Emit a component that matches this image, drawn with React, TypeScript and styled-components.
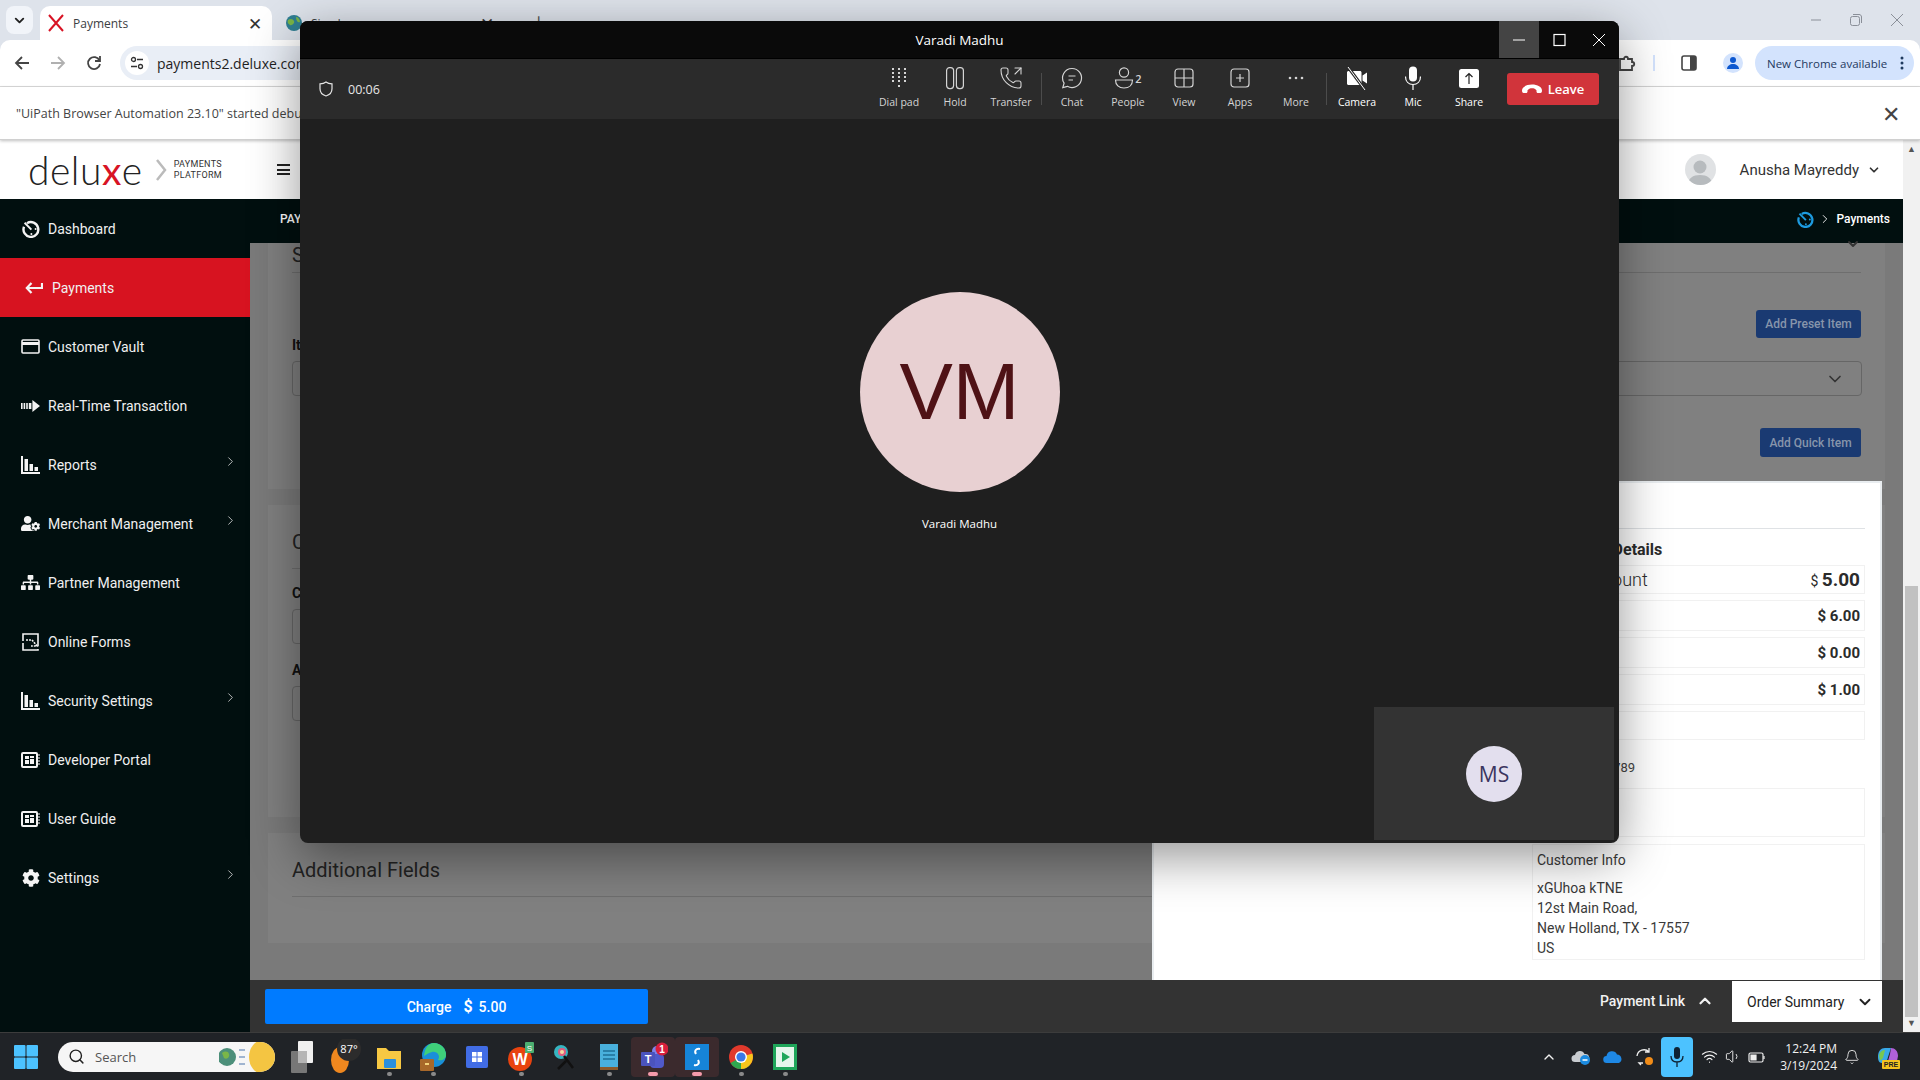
import React from 'react';
import styled, { createGlobalStyle } from 'styled-components';
import { ChevronDown, ChevronRight, ChevronUp, PhoneOutgoing, Search, Bell, Wifi, Volume1 } from 'lucide-react';
import { FaCog, FaSitemap, FaUserCog } from 'react-icons/fa';

const GlobalStyle = createGlobalStyle`
html, body {
    margin: 0;
    padding: 0;
    width: 1920px;
    height: 1080px;
    overflow: hidden;
    background: #dee3eb;
    font-family: Roboto, "Liberation Sans", sans-serif;
}
* { box-sizing: border-box; }
`;

const Desktop = styled.div`
position: relative;
width: 1920px;
height: 1080px;
display: flex;
flex-direction: column;
overflow: hidden;
`;

/* chrome */
const TabStrip = styled.div`
height: 40px;
flex: none;
display: flex;
align-items: flex-end;
padding-left: 6px;
background: #dee3eb;
font-family: "Open Sans", sans-serif;
font-size: 12px;
color: #3c4043;
`;

const TabListButton = styled.div`
width: 27px;
height: 28px;
margin: 0 7px 6px 0;
display: flex;
align-items: center;
justify-content: center;
background: #f1f4f9;
border-radius: 8px;
color: #222;
`;

const Tab = styled.div<{ $active?: boolean }>`
width: 232px;
height: 34px;
display: flex;
align-items: center;
gap: 9px;
padding: 0 10px 0 ${props => props.$active ? "8px" : "14px"};
background: ${props => props.$active ? "#fff" : "transparent"};
border-radius: 10px 10px 0 0;
`;

const TabTitle = styled.span`
flex: 1;
`;

const TabClose = styled.span`
font-size: 17px;
line-height: 1;
color: #333;
`;

const TabPlus = styled.span`
margin: 0 0 9px 29px;
font-size: 20px;
line-height: 1;
color: #555;
`;

const WindowControls = styled.div`
margin-left: auto;
align-self: flex-start;
display: flex;
align-items: center;
gap: 26px;
height: 40px;
padding-right: 15px;
color: #8a8f98;
`;

const ChromeToolbar = styled.div`
height: 47px;
flex: none;
display: flex;
align-items: center;
background: #fff;
border-bottom: 1px solid #dcdcdc;
border-radius: 10px 10px 0 0;
font-family: "Open Sans", sans-serif;
`;

const NavIcon = styled.span`
width: 36px;
display: flex;
justify-content: center;
`;

const Omnibox = styled.div`
width: 700px;
height: 34px;
margin-left: 8px;
display: flex;
align-items: center;
gap: 8px;
padding-left: 5px;
background: #e9eef6;
border-radius: 17px;
font-size: 14px;
color: #1f1f1f;
`;

const TuneBadge = styled.span`
width: 24px;
height: 24px;
display: flex;
align-items: center;
justify-content: center;
background: #fff;
border-radius: 50%;
`;

const ToolbarRight = styled.div`
margin-left: auto;
display: flex;
align-items: center;
padding-right: 6px;
`;

const ToolbarSeparator = styled.span`
width: 2px;
height: 16px;
margin: 0 26px 0 17px;
background: #d3e3fd;
`;

const ProfileBadge = styled.span`
width: 20px;
height: 20px;
margin: 0 12px 0 26px;
display: flex;
align-items: center;
justify-content: center;
background: #d3e3fd;
border-radius: 50%;
`;

const UpdatePill = styled.div`
width: 159px;
height: 34px;
display: flex;
align-items: center;
justify-content: space-between;
padding: 0 10px 0 12px;
background: #d3e3fd;
border-radius: 17px;
font-size: 11.5px;
white-space: nowrap;
color: #1f3a5f;
`;

const InfoBar = styled.div`
height: 53px;
flex: none;
display: flex;
align-items: center;
justify-content: space-between;
padding: 0 20px 0 16px;
background: #fff;
border-bottom: 1px solid #d0d0d0;
box-shadow: 0 1px 3px rgba(0,0,0,.25);
position: relative;
font-family: "Open Sans", sans-serif;
font-size: 12.5px;
color: #444;
`;

const InfoClose = styled.span`
font-size: 22px;
line-height: 1;
color: #444;
`;

/* deluxe page */
const PageArea = styled.div`
flex: 1;
min-height: 0;
display: flex;
`;

const PageBody = styled.div`
flex: 1;
min-width: 0;
display: flex;
flex-direction: column;
`;

const PageHeader = styled.div`
height: 59px;
flex: none;
display: flex;
align-items: center;
padding-left: 28px;
background: #fff;
`;

const Logo = styled.div`
display: flex;
align-items: center;
font-family: Lato, sans-serif;
font-weight: 300;
font-size: 39px;
letter-spacing: .5px;
color: #222;
`;

const LogoX = styled.span`
color: #d81324;
font-weight: 400;
`;

const LogoTag = styled.div`
margin-left: 6px;
font-family: Roboto, sans-serif;
font-size: 9px;
line-height: 11px;
letter-spacing: .3px;
color: #333;
`;

const Hamburger = styled.div`
width: 13px;
height: 11px;
margin-left: 55px;
border-top: 2px solid #222;
border-bottom: 2px solid #222;
position: relative;
&::after {
    content: "";
    position: absolute;
    left: 0;
    right: 0;
    top: 2.5px;
    height: 2px;
    background: #222;
}
`;

const UserArea = styled.div`
margin-left: auto;
display: flex;
align-items: center;
padding-right: 22px;
font-size: 15px;
color: #333;
`;

const UserAvatar = styled.span`
width: 31px;
height: 31px;
margin-right: 24px;
display: flex;
align-items: flex-end;
justify-content: center;
background: #e0e2e4;
border-radius: 50%;
overflow: hidden;
`;

const UserName = styled.span`
margin-right: 8px;
`;

const PageColumns = styled.div`
flex: 1;
min-height: 0;
display: flex;
`;

const Sidebar = styled.nav`
width: 250px;
flex: none;
background: #010f0f;
`;

const NavItem = styled.div<{ $active?: boolean }>`
height: 59px;
display: flex;
align-items: center;
padding: 0 12px 0 ${props => props.$active ? "24px" : "21px"};
background: ${props => props.$active ? "#d71320" : "transparent"};
font-size: 14px;
color: #f0f0f0;
`;

const NavGlyph = styled.span<{ $active?: boolean }>`
width: 19px;
height: 20px;
margin-right: ${props => props.$active ? "9px" : "8px"};
display: flex;
align-items: center;
justify-content: center;
color: #f4f4f4;
`;

const NavLabel = styled.span`
flex: 1;
`;

const NavArrow = styled.span`
display: flex;
margin-top: -6px;
color: #ddd;
`;

const MainColumn = styled.div`
flex: 1;
min-width: 0;
display: flex;
flex-direction: column;
`;

const TopBar = styled.div`
height: 44px;
flex: none;
display: flex;
align-items: center;
justify-content: space-between;
padding: 0 13px 4px 30px;
background: #010f0f;
font-size: 12px;
font-weight: 500;
color: #fff;
`;

const Crumbs = styled.div`
display: flex;
align-items: center;
gap: 4px;
`;

const GrayArea = styled.div`
flex: 1;
min-height: 0;
position: relative;
display: flex;
flex-direction: column;
gap: 16px;
padding: 0 18px;
background: #7a7a7a;
`;

const Card = styled.section<{ $height: number }>`
height: ${props => props.$height}px;
flex: none;
padding: 0 24px;
background: #808080;
color: #1c1c1c;
`;

const CardTitle = styled.div<{ $top: number }>`
margin-top: ${props => props.$top}px;
padding-bottom: 14px;
border-bottom: 1px solid #6e6e6e;
font-size: 20px;
color: #222;
`;

const TitleRow = styled.div`
height: 30px;
display: flex;
justify-content: space-between;
border-bottom: 1px solid #6e6e6e;
font-size: 20px;
color: #222;
`;

const ClippedChevron = styled.span`
margin-top: -10px;
color: #333;
`;

const RowEnd = styled.div`
display: flex;
justify-content: flex-end;
`;

const SubLabel = styled.div`
margin-top: 20px;
font-size: 12px;
color: #555;
`;

const FieldLabel = styled.div<{ $top: number }>`
margin-top: ${props => props.$top}px;
font-size: 14px;
font-weight: 700;
color: #111;
`;

const FieldBox = styled.div`
height: 35px;
margin-top: 8px;
margin-right: -1px;
display: flex;
align-items: center;
justify-content: flex-end;
padding-right: 16px;
border: 1px solid #666;
border-radius: 4px;
color: #333;
`;

const PresetButton = styled.div<{ $width: number; $height: number; $top: number }>`
width: ${props => props.$width}px;
height: ${props => props.$height}px;
margin-top: ${props => props.$top}px;
display: flex;
align-items: center;
justify-content: center;
background: #1a3a72;
border-radius: 3px;
font-size: 12px;
font-weight: 500;
color: #8795ab;
`;

const SummaryPanel = styled.aside`
position: absolute;
right: 21px;
bottom: 0;
width: 730px;
height: 499px;
padding-right: 15px;
background: #fff;
border: 2px solid #e9edf0;
border-bottom: 0;
color: #333;
`;

const SummaryHead = styled.div`
height: 46px;
border-bottom: 1px solid #dfe2e5;
`;

const SummaryColumn = styled.div`
width: 333px;
margin-left: auto;
display: flex;
flex-direction: column;
font-size: 14px;
`;

const SummaryTitle = styled.div`
height: 36px;
display: flex;
align-items: center;
padding: 4px 0 0 13px;
font-size: 16px;
font-weight: 700;
color: #2b2b2b;
`;

const SummaryRow = styled.div<{ $height: number; $large?: boolean }>`
height: ${props => props.$height}px;
margin-bottom: 6px;
display: flex;
align-items: center;
justify-content: space-between;
padding: 0 4px;
border: 1px solid #f1f1f1;
font-size: ${props => props.$large ? "18px" : "15px"};
font-weight: ${props => props.$large ? 300 : 700};
color: #2b2b2b;
`;

const Money = styled.span`
font-size: 14px;
font-weight: 400;
`;

const Amount = styled.strong`
font-size: 19px;
font-weight: 700;
`;

const InvoiceLine = styled.div`
height: 42px;
display: flex;
align-items: center;
padding-left: 13px;
font-size: 13px;
color: #444;
`;

const EmptyBox = styled.div`
height: 49px;
margin-bottom: 7px;
border: 1px solid #f1f1f1;
`;

const CustomerBox = styled.div`
height: 116px;
padding: 5px 4px;
border: 1px solid #f1f1f1;
font-size: 14px;
line-height: 20px;
color: #3a3a3a;
`;

const CustomerAddress = styled.div`
margin-top: 8px;
`;

const BottomBar = styled.div`
height: 52px;
flex: none;
display: flex;
align-items: flex-start;
padding: 9px 21px 0 15px;
background: #333;
`;

const ChargeButton = styled.div`
width: 383px;
height: 35px;
display: flex;
align-items: center;
justify-content: center;
gap: 6px;
background: #007bff;
border-radius: 2px;
font-size: 14px;
font-weight: 500;
color: #fff;
`;

const ChargeDollar = styled.b`
font-size: 16px;
margin-left: 6px;
`;

const PaymentLink = styled.div`
margin-left: auto;
height: 23px;
display: flex;
align-items: center;
gap: 11px;
font-size: 14px;
font-weight: 500;
color: #f2f2f2;
`;

const OrderTab = styled.div`
width: 150px;
height: 41px;
margin: -8px 0 0 18px;
display: flex;
align-items: center;
justify-content: space-between;
padding: 0 8px 0 15px;
background: #fff;
font-size: 14px;
color: #222;
`;

const Scrollbar = styled.div`
width: 17px;
flex: none;
display: flex;
flex-direction: column;
justify-content: space-between;
align-items: center;
padding: 4px 0;
background: #f1f1f1;
color: #555;
font-size: 9px;
`;

const ScrollThumb = styled.div`
width: 13px;
height: 431px;
margin-top: 430px;
background: #c1c1c1;
`;

/* windows taskbar */
const Taskbar = styled.div`
height: 48px;
flex: none;
display: flex;
align-items: center;
background: #202327;
border-top: 1px solid #3c3c3c;
font-family: "Open Sans", sans-serif;
`;

const StartSlot = styled.div`
width: 58px;
display: flex;
justify-content: center;
padding-right: 7px;
`;

const SearchBox = styled.div`
width: 217px;
height: 30px;
margin-right: 4px;
display: flex;
align-items: center;
gap: 10px;
padding-left: 10px;
background: #f6f6f6;
border-radius: 15px;
font-size: 13px;
color: #555;
overflow: hidden;
`;

const SearchText = styled.span`
flex: 1;
`;

const TaskSlot = styled.div<{ $running?: boolean; $open?: boolean }>`
position: relative;
width: 44px;
height: 40px;
display: flex;
align-items: center;
justify-content: center;
background: ${props => props.$open ? "#3b2a2d" : "transparent"};
border-radius: 4px;
&::after {
    content: "";
    display: ${props => props.$running || props.$open ? "block" : "none"};
    position: absolute;
    left: 50%;
    bottom: 1px;
    width: ${props => props.$open ? "10px" : "5px"};
    height: 4px;
    margin-left: ${props => props.$open ? "-5px" : "-2.5px"};
    background: ${props => props.$open ? "#f59bab" : "#8a8a8a"};
    border-radius: 2px;
}
`;

const Tray = styled.div`
margin-left: auto;
display: flex;
align-items: center;
padding-right: 14px;
color: #f2f2f2;
`;

const TraySlot = styled.div<{ $width: number }>`
width: ${props => props.$width}px;
display: flex;
justify-content: center;
`;

const MicSlot = styled.div`
width: 32px;
height: 40px;
display: flex;
align-items: center;
justify-content: center;
background: #4cc2ff;
border-radius: 4px;
`;

const TrayClock = styled.div`
width: 68px;
margin-right: 3px;
font-size: 12px;
line-height: 17px;
text-align: right;
white-space: nowrap;
color: #f2f2f2;
`;

/* teams call window */
const CallWindow = styled.div`
position: absolute;
left: 300px;
top: 21px;
width: 1319px;
height: 822px;
display: flex;
flex-direction: column;
background: #1f1f1f;
border-radius: 8px;
overflow: hidden;
box-shadow: 0 14px 50px rgba(0,0,0,.42);
font-family: "Open Sans", sans-serif;
color: #fff;
`;

const CallTitleBar = styled.div`
height: 38px;
flex: none;
position: relative;
display: flex;
align-items: center;
justify-content: flex-end;
background: #0a0a0a;
border-bottom: 1px solid #000;
`;

const CallTitle = styled.div`
position: absolute;
left: 0;
right: 0;
text-align: center;
font-size: 13.5px;
`;

const CaptionButton = styled.div<{ $hover?: boolean }>`
position: relative;
width: 40px;
height: 37px;
display: flex;
align-items: center;
justify-content: center;
background: ${props => props.$hover ? "#444" : "transparent"};
`;

const CallToolbar = styled.div`
height: 60px;
flex: none;
display: flex;
align-items: center;
padding: 0 20px 0 19px;
background: #2b2b2b;
font-size: 13px;
`;

const Timer = styled.span`
margin-left: 15px;
font-size: 12.5px;
color: #e6e6e6;
`;

const CallActions = styled.div`
margin-left: auto;
display: flex;
align-items: center;
`;

const CallAction = styled.div<{ $bright?: boolean }>`
width: 56px;
height: 50px;
display: flex;
flex-direction: column;
align-items: center;
justify-content: flex-start;
gap: 3px;
font-size: 10.5px;
white-space: nowrap;
color: ${props => props.$bright ? "#fff" : "#d4d4d4"};
`;

const ActionIcon = styled.span`
height: 28px;
display: flex;
align-items: center;
justify-content: center;
`;

const ActionDivider = styled.span`
width: 1px;
height: 32px;
margin: 0 2px;
background: #4c4c4c;
`;

const PeopleCount = styled.span`
margin-left: 1px;
font-size: 11px;
font-weight: 600;
`;

const LeaveButton = styled.div`
width: 92px;
height: 32px;
margin-left: 10px;
display: flex;
align-items: center;
justify-content: center;
gap: 6px;
background: #d1343b;
border-radius: 3px;
font-size: 13px;
font-weight: 600;
`;

const CallStage = styled.div`
flex: 1;
min-height: 0;
position: relative;
display: flex;
flex-direction: column;
align-items: center;
padding-top: 173px;
`;

const MainAvatar = styled.div`
width: 200px;
height: 200px;
display: flex;
align-items: center;
justify-content: center;
background: #e8d0d2;
border-radius: 50%;
font-family: "Liberation Sans", sans-serif;
font-size: 80px;
color: #4f1216;
`;

const ParticipantName = styled.div`
margin-top: 24px;
font-size: 11.5px;
color: #fff;
`;

const SelfTile = styled.div`
position: absolute;
right: 5px;
bottom: 3px;
width: 240px;
height: 133px;
display: flex;
align-items: center;
justify-content: center;
background: #333;
`;

const SelfAvatar = styled.div`
width: 56px;
height: 56px;
display: flex;
align-items: center;
justify-content: center;
background: #e3dfee;
border-radius: 50%;
font-size: 21px;
color: #3b3560;
`;

const DashGlyph: React.FC<{ color?: string; size?: number }> = ({ color = 'currentColor', size = 18 }) => (
    <svg width={size} height={size} viewBox="0 0 18 18" fill="none">
        <path d="M5 3.2A7.4 7.4 0 1 1 2 6.8" stroke={color} strokeWidth="2.4" />
        <path d="M2.6 2.8 9.4 9.6" stroke={color} strokeWidth="2" />
        <circle cx="9.4" cy="14" r="1" fill={color} />
        <circle cx="13.6" cy="9" r="1" fill={color} />
    </svg>
);

const BarsGlyph = () => (
    <svg width="19" height="18" viewBox="0 0 19 18" fill="currentColor">
        <path d="M0 0h2v16h17v2H0z" />
        <path d="M3.5 3H7v12H3.5zM8.5 8H12v7H8.5zM13.5 11H17v4h-3.5z" />
    </svg>
);

const BookGlyph = () => (
    <svg width="19" height="16" viewBox="0 0 19 16" fill="none">
        <rect x="1" y="1" width="15" height="14" rx="1" stroke="currentColor" strokeWidth="2" />
        <path d="M4 4h4v3H4zM4 8h4v4H4zM9 4h4v2H9zM9 7h4v5H9z" fill="currentColor" />
        <path d="M17 3h2M17 6h2M17 9h2M17 12h2" stroke="currentColor" />
    </svg>
);

const navItems: { label: string; icon: React.ReactNode; arrow?: boolean; active?: boolean }[] = [
    { label: 'Dashboard', icon: <DashGlyph /> },
    {
        label: 'Payments',
        active: true,
        icon: (
            <svg width="18" height="12" viewBox="0 0 18 12" fill="none" stroke="currentColor" strokeWidth="2.2">
                <path d="M17 1v5H2M6.5 1 1.8 6l4.7 5" />
            </svg>
        ),
    },
    {
        label: 'Customer Vault',
        icon: (
            <svg width="19" height="15" viewBox="0 0 19 15" fill="none" stroke="currentColor" strokeWidth="1.6">
                <rect x="1" y="1" width="17" height="13" rx="1" />
                <path d="M1 4.5h17" strokeWidth="3" />
            </svg>
        ),
    },
    {
        label: 'Real-Time Transaction',
        icon: (
            <svg width="19" height="12" viewBox="0 0 19 12" fill="currentColor">
                <path d="M0 3h1.6v6H0zM2.6 3h1.6v6H2.6zM5.2 3h1.6v6H5.2zM7.8 3h2.6v6H7.8zM11.4 0 19 6l-7.6 6z" />
            </svg>
        ),
    },
    { label: 'Reports', icon: <BarsGlyph />, arrow: true },
    { label: 'Merchant Management', icon: <FaUserCog size={21} />, arrow: true },
    { label: 'Partner Management', icon: <FaSitemap size={21} /> },
    {
        label: 'Online Forms',
        icon: (
            <svg width="18" height="18" viewBox="0 0 18 18" fill="none" stroke="currentColor" strokeWidth="1.6">
                <path d="M1 8V1h15v12M1 10v7h15v-1" />
                <path d="M4 7h6M10 7l5 6H9" strokeDasharray="2 1" />
            </svg>
        ),
    },
    { label: 'Security Settings', icon: <BarsGlyph />, arrow: true },
    { label: 'Developer Portal', icon: <BookGlyph /> },
    { label: 'User Guide', icon: <BookGlyph /> },
    { label: 'Settings', icon: <FaCog size={18} />, arrow: true },
];

const callActions: { label: string; icon: React.ReactNode }[] = [
    {
        label: 'Dial pad',
        icon: (
            <svg width="20" height="24" viewBox="0 0 20 24" fill="#d4d4d4">
                {[3, 7, 11, 15].map(y => [4, 10, 16].map(x => <rect key={`${x}-${y}`} x={x - 1} y={y - 1} width="2" height="2" />))}
                <rect x="9" y="19" width="2" height="2" />
            </svg>
        ),
    },
    {
        label: 'Hold',
        icon: (
            <svg width="22" height="24" viewBox="0 0 22 24" fill="none" stroke="#d4d4d4" strokeWidth="1.2">
                <rect x="2.6" y="1.6" width="7" height="21" rx="3" />
                <rect x="12.4" y="1.6" width="7" height="21" rx="3" />
            </svg>
        ),
    },
    { label: 'Transfer', icon: <PhoneOutgoing size={24} strokeWidth={1.1} color="#d4d4d4" /> },
];

const ChatIcon = () => (
    <svg width="24" height="24" viewBox="0 0 24 24" fill="none" stroke="#d4d4d4" strokeWidth="1.2">
        <path d="M12 2.5a9.5 9.5 0 1 1-4.6 17.8L2.8 21.6l1.3-4.4A9.5 9.5 0 0 1 12 2.5z" />
        <path d="M8.5 10h7M8.5 14h4.5" />
    </svg>
);

const PersonIcon = () => (
    <svg width="20" height="24" viewBox="0 0 20 24" fill="none" stroke="#d4d4d4" strokeWidth="1.2">
        <circle cx="10" cy="6.5" r="4.6" />
        <path d="M1.5 14h17c0 5-3.4 8-8.5 8s-8.5-3-8.5-8z" />
    </svg>
);

const GridIcon = () => (
    <svg width="24" height="24" viewBox="0 0 24 24" fill="none" stroke="#d4d4d4" strokeWidth="1.2">
        <rect x="3" y="3" width="18" height="18" rx="3" />
        <path d="M12 3v18M3 12h18" />
    </svg>
);

const AppsIcon = () => (
    <svg width="24" height="24" viewBox="0 0 24 24" fill="none" stroke="#d4d4d4" strokeWidth="1.2">
        <rect x="3" y="3" width="18" height="18" rx="3" />
        <path d="M12 8v8M8 12h8" />
    </svg>
);

const MoreIcon = () => (
    <svg width="20" height="24" viewBox="0 0 20 24" fill="#d4d4d4">
        <circle cx="4" cy="12" r="1.3" />
        <circle cx="10" cy="12" r="1.3" />
        <circle cx="16" cy="12" r="1.3" />
    </svg>
);

const CameraOffIcon = () => (
    <svg width="24" height="24" viewBox="0 0 24 24">
        <path d="M2 6.5C2 5.7 2.7 5 3.5 5H15c.8 0 1.5.7 1.5 1.5v11c0 .8-.7 1.5-1.5 1.5H3.5C2.7 19 2 18.300 2 17.500zM17.500 9.500 22 6.500v11l-4.500-3z" fill="#fff" />
        <path d="M3 1l17 23" stroke="#2b2b2b" strokeWidth="3" />
        <path d="M3 1l17 23" stroke="#fff" strokeWidth="1" />
    </svg>
);

const MicIcon = () => (
    <svg width="22" height="24" viewBox="0 0 22 24" fill="none">
        <rect x="7" y="0.500" width="8" height="15" rx="4" fill="#fff" />
        <path d="M3.500 10.500c0 5 3.200 8 7.500 8s7.500-3 7.500-8M11 18.500V24" stroke="#fff" strokeWidth="1.200" />
    </svg>
);

const ShareIcon = () => (
    <svg width="22" height="24" viewBox="0 0 22 24" fill="none">
        <rect x="1" y="3" width="20" height="19" rx="2.500" fill="#fff" />
        <path d="M11 18V7.500M7.500 11 11 7.500l3.500 3.500" stroke="#222" strokeWidth="1.200" />
    </svg>
);

const HangUpIcon = () => (
    <svg width="20" height="10" viewBox="0 0 20 10" fill="#fff">
        <path d="M0 6.500C0 3 4.500 0.500 10 0.500S20 3 20 6.500c0 1.200-.5 2.500-1.500 2.500h-2.600c-.9 0-1.400-.7-1.400-1.500V6.300C13.500 4.800 12 4.200 10 4.200s-3.500.6-4.500 2.100v1.200C5.500 8.300 5 9 4.100 9H1.500C.5 9 0 7.700 0 6.500z" />
    </svg>
);

const AppTiles = () => (
    <svg width="28" height="28" viewBox="0 0 28 28">
        <rect x="3" y="3" width="22" height="22" rx="2" fill="#2b7cf0" />
        <rect x="3" y="3" width="22" height="22" rx="2" fill="#6a4fd0" opacity=".35" />
        <path d="M9 9h4.500v4.500H9zM14.500 9H19v4.500h-4.500zM9 14.500h4.500V19H9zM14.500 14.500H19V19h-4.500z" fill="#fff" />
    </svg>
);

const taskApps: { key: string; running?: boolean; open?: boolean; icon: React.ReactNode }[] = [
    {
        key: 'taskview',
        icon: (
            <svg width="24" height="36" viewBox="0 0 24 36">
                <rect x="9" y="2" width="15" height="22" rx="1" fill="#f0f0f0" />
                <rect x="2" y="12" width="16" height="22" rx="1" fill="#777" />
                <rect x="9" y="12" width="9" height="12" fill="#b5b5b5" />
            </svg>
        ),
    },
    {
        key: 'weather',
        icon: (
            <svg width="32" height="36" viewBox="0 0 32 36">
                <ellipse cx="11" cy="21" rx="9" ry="13" fill="#f0881f" />
                <circle cx="20" cy="10" r="12" fill="#2c2c2c" />
                <text x="20" y="14" textAnchor="middle" fontSize="11" fill="#fff" fontFamily="Open Sans">87°</text>
            </svg>
        ),
    },
    {
        key: 'files',
        running: true,
        icon: (
            <svg width="26" height="26" viewBox="0 0 26 26">
                <path d="M1 4h9l3 3h12v18H1z" fill="#f7c843" />
                <rect x="8" y="15" width="12" height="9" rx="1" fill="#2a8fdc" />
            </svg>
        ),
    },
    {
        key: 'edge',
        running: true,
        icon: (
            <svg width="28" height="30" viewBox="0 0 28 30">
                <circle cx="15" cy="13" r="12" fill="#1a8fd8" />
                <path d="M15 1a12 12 0 0 1 12 12c0 4-4 6-8 5 3-4-1-9-6-8-3 .6-6 3-8 4C6 6 9 1 15 1z" fill="#3fd07a" />
                <rect x="1" y="17" width="14" height="12" rx="1" fill="#a8682a" />
                <rect x="6" y="21" width="4" height="2" fill="#f4d27a" />
            </svg>
        ),
    },
    { key: 'store', icon: <AppTiles /> },
    {
        key: 'wps',
        running: true,
        icon: (
            <svg width="28" height="30" viewBox="0 0 28 30">
                <circle cx="13" cy="17" r="12" fill="#e8430f" />
                <text x="13" y="23" textAnchor="middle" fontSize="16" fontWeight="700" fill="#fff" fontFamily="Liberation Sans">W</text>
                <rect x="18" y="0" width="9" height="11" rx="1" fill="#4caf72" />
                <text x="22.500" y="9" textAnchor="middle" fontSize="8" fill="#fff" fontFamily="Liberation Sans">S</text>
            </svg>
        ),
    },
    {
        key: 'snip',
        icon: (
            <svg width="26" height="28" viewBox="0 0 26 28">
                <circle cx="9" cy="9" r="7" fill="#36b4c0" />
                <circle cx="10" cy="9" r="4" fill="#e05a7d" />
                <circle cx="10" cy="9" r="2" fill="#f3d9a0" />
                <path d="M12 13l9 12M14 18l-8 8" stroke="#111" strokeWidth="2.500" />
            </svg>
        ),
    },
    {
        key: 'notes',
        running: true,
        icon: (
            <svg width="20" height="28" viewBox="0 0 20 28">
                <rect x="1" y="1" width="18" height="26" fill="#49b0dc" />
                <rect x="1" y="24" width="18" height="3" fill="#8a5a2b" />
                <path d="M4 8h12M4 12h12M4 16h12" stroke="#1e6f96" strokeWidth="1.500" />
            </svg>
        ),
    },
    {
        key: 'teams',
        open: true,
        icon: (
            <svg width="30" height="30" viewBox="0 0 30 30">
                <circle cx="19" cy="9" r="5" fill="#7b83eb" />
                <rect x="12" y="12" width="14" height="14" rx="4" fill="#5059c9" />
                <rect x="3" y="10" width="14" height="14" rx="1" fill="#4b53bc" />
                <text x="10" y="21" textAnchor="middle" fontSize="11" fontWeight="700" fill="#fff" fontFamily="Liberation Sans">T</text>
                <circle cx="24" cy="7" r="6.500" fill="#d71f3c" />
                <text x="24" y="11" textAnchor="middle" fontSize="10" fontWeight="700" fill="#fff" fontFamily="Liberation Sans">1</text>
            </svg>
        ),
    },
    {
        key: 'uipath',
        open: true,
        icon: (
            <svg width="24" height="26" viewBox="0 0 24 26">
                <rect width="24" height="26" fill="#1684d8" />
                <path d="M15 5c-4-1-6 2-4 5M9 21c4 1 6-2 4-5" fill="none" stroke="#fff" strokeWidth="2" />
            </svg>
        ),
    },
    {
        key: 'chrome',
        running: true,
        icon: (
            <svg width="26" height="26" viewBox="0 0 26 26">
                <circle cx="13" cy="13" r="12" fill="#e0392c" />
                <path d="M13 13 2.600 19A12 12 0 0 0 13 25a12 12 0 0 0 9-4z" fill="#2fa84f" />
                <path d="M13 13 24.400 9.500A12 12 0 0 1 13 25z" fill="#f8c51c" />
                <circle cx="13" cy="13" r="6" fill="#fff" />
                <circle cx="13" cy="13" r="4.600" fill="#3b78e7" />
            </svg>
        ),
    },
    {
        key: 'player',
        running: true,
        icon: (
            <svg width="24" height="26" viewBox="0 0 24 26">
                <rect width="24" height="26" fill="#1fa65a" />
                <rect x="3" y="3" width="18" height="20" fill="#e6f6ec" />
                <path d="M9 8l8 5-8 5z" fill="#1fa65a" />
            </svg>
        ),
    },
];

const App: React.FC = () => {
    return (
        <Desktop>
            <GlobalStyle />

            <TabStrip>
                <TabListButton><ChevronDown size={15} strokeWidth={3} /></TabListButton>
                <Tab $active>
                    <svg width="16" height="18" viewBox="0 0 16 18" fill="none" stroke="#d81324" strokeWidth="2">
                        <path d="M1 1l14 16M15 1 1 17" />
                    </svg>
                    <TabTitle>Payments</TabTitle>
                    <TabClose>✕</TabClose>
                </Tab>
                <Tab>
                    <svg width="16" height="16" viewBox="0 0 16 16">
                        <circle cx="8" cy="8" r="8" fill="#2f7f93" />
                        <path d="M2 5c3-2 5-1 6 1s-2 5-4 4-3-3-2-5zM10 2c2 0 4 2 4 5-2 1-4-1-4-5z" fill="#7ab648" />
                    </svg>
                    <TabTitle>Sign In</TabTitle>
                    <TabClose>✕</TabClose>
                </Tab>
                <TabPlus>+</TabPlus>
                <WindowControls>
                    <svg width="14" height="14" viewBox="0 0 14 14" stroke="currentColor" fill="none"><path d="M2 7h10" /></svg>
                    <svg width="14" height="14" viewBox="0 0 14 14" stroke="currentColor" fill="none"><rect x="1.500" y="3.500" width="9" height="9" rx="2" /><path d="M4 1.500h6c1.500 0 2.500 1 2.500 2.500v6" /></svg>
                    <svg width="16" height="16" viewBox="0 0 16 16" stroke="currentColor" fill="none"><path d="M2 2l12 12M14 2 2 14" /></svg>
                </WindowControls>
            </TabStrip>

            <ChromeToolbar>
                <NavIcon style={{ marginLeft: 4 }}>
                    <svg width="16" height="16" viewBox="0 0 16 16" fill="none" stroke="#444" strokeWidth="1.800"><path d="M15 8H2M8 2 2 8l6 6" /></svg>
                </NavIcon>
                <NavIcon>
                    <svg width="16" height="16" viewBox="0 0 16 16" fill="none" stroke="#b0b0b0" strokeWidth="1.800"><path d="M1 8h13M8 2l6 6-6 6" /></svg>
                </NavIcon>
                <NavIcon>
                    <svg width="16" height="16" viewBox="0 0 16 16" fill="none" stroke="#444" strokeWidth="1.800"><path d="M13.500 5.500A6 6 0 1 0 14 9" /><path d="M14 1v5H9" /></svg>
                </NavIcon>
                <Omnibox>
                    <TuneBadge>
                        <svg width="14" height="14" viewBox="0 0 14 14" fill="none" stroke="#333" strokeWidth="1.300"><circle cx="3.500" cy="3.500" r="2" /><path d="M7 3.500h6M1 10.500h6" /><circle cx="10.500" cy="10.500" r="2" /></svg>
                    </TuneBadge>
                    payments2.deluxe.com/
                </Omnibox>
                <ToolbarRight>
                    <svg width="18" height="18" viewBox="0 0 18 18" fill="none" stroke="#444" strokeWidth="1.800"><path d="M2 5h4c0-3 4-3 4 0h4v3c3 0 3 4 0 4v4H2z" /></svg>
                    <ToolbarSeparator />
                    <svg width="16" height="16" viewBox="0 0 16 16"><rect x="1" y="1" width="14" height="14" rx="2" fill="none" stroke="#444" strokeWidth="1.600" /><rect x="9" y="1" width="6" height="14" fill="#444" /></svg>
                    <ProfileBadge>
                        <svg width="14" height="14" viewBox="0 0 14 14" fill="#0b57d0"><circle cx="7" cy="4" r="3" /><path d="M1 13c0-3 3-5 6-5s6 2 6 5z" /></svg>
                    </ProfileBadge>
                    <UpdatePill>
                        New Chrome available
                        <svg width="4" height="14" viewBox="0 0 4 14" fill="#1f3a5f"><circle cx="2" cy="2" r="1.500" /><circle cx="2" cy="7" r="1.500" /><circle cx="2" cy="12" r="1.500" /></svg>
                    </UpdatePill>
                </ToolbarRight>
            </ChromeToolbar>

            <InfoBar>
                <span>"UiPath Browser Automation 23.10" started debugging this browser</span>
                <InfoClose>✕</InfoClose>
            </InfoBar>

            <PageArea>
                <PageBody>
                    <PageHeader>
                        <Logo>
                            delu<LogoX>x</LogoX>e
                            <svg width="13" height="24" viewBox="0 0 13 24" fill="none" stroke="#bbb" strokeWidth="2.500" style={{ marginLeft: 12 }}><path d="M2 2l8 10-8 10" /></svg>
                        </Logo>
                        <LogoTag>PAYMENTS<br />PLATFORM</LogoTag>
                        <Hamburger />
                        <UserArea>
                            <UserAvatar>
                                <svg width="24" height="27" viewBox="0 0 24 27" fill="#b7bbbe"><circle cx="12" cy="9" r="6.500" /><path d="M0 27c0-7 5-10 12-10s12 3 12 10z" /></svg>
                            </UserAvatar>
                            <UserName>Anusha Mayreddy</UserName>
                            <ChevronDown size={14} strokeWidth={3} />
                        </UserArea>
                    </PageHeader>
                    <PageColumns>
                        <Sidebar>
                            {navItems.map(item => (
                                <NavItem key={item.label} $active={item.active}>
                                    <NavGlyph $active={item.active}>{item.icon}</NavGlyph>
                                    <NavLabel>{item.label}</NavLabel>
                                    {item.arrow && <NavArrow><ChevronRight size={15} strokeWidth={1.300} /></NavArrow>}
                                </NavItem>
                            ))}
                        </Sidebar>
                        <MainColumn>
                            <TopBar>
                                <span>PAYMENTS</span>
                                <Crumbs>
                                    <DashGlyph color="#1d9be0" size={17} />
                                    <ChevronRight size={14} strokeWidth={1.500} />
                                    <span>Payments</span>
                                </Crumbs>
                            </TopBar>
                            <GrayArea>
                                <Card $height={246}>
                                    <TitleRow>
                                        <span>Shopping Cart</span>
                                        <ClippedChevron><ChevronDown size={16} strokeWidth={3} /></ClippedChevron>
                                    </TitleRow>
                                    <RowEnd>
                                        <PresetButton $width={105} $height={28} $top={37}>Add Preset Item</PresetButton>
                                    </RowEnd>
                                    <FieldLabel $top={-1}>Item</FieldLabel>
                                    <FieldBox><ChevronDown size={20} strokeWidth={2} /></FieldBox>
                                    <RowEnd>
                                        <PresetButton $width={101} $height={29} $top={32}>Add Quick Item</PresetButton>
                                    </RowEnd>
                                </Card>
                                <Card $height={312}>
                                    <CardTitle $top={25}>Customer Details</CardTitle>
                                    <FieldLabel $top={16}>Customer</FieldLabel>
                                    <FieldBox />
                                    <FieldLabel $top={18}>Address</FieldLabel>
                                    <FieldBox />
                                </Card>
                                <Card $height={110}>
                                    <CardTitle $top={25}>Additional Fields</CardTitle>
                                </Card>
                                <SummaryPanel>
                                    <SummaryHead />
                                    <SummaryColumn>
                                        <SummaryTitle>Payment Details</SummaryTitle>
                                        <SummaryRow $height={29} $large>
                                            <span>Order Amount</span>
                                            <span><Money>$ </Money><Amount>5.00</Amount></span>
                                        </SummaryRow>
                                        <SummaryRow $height={31}><span /><span>$ 6.00</span></SummaryRow>
                                        <SummaryRow $height={31}><span /><span>$ 0.00</span></SummaryRow>
                                        <SummaryRow $height={31}><span /><span>$ 1.00</span></SummaryRow>
                                        <SummaryRow $height={29} />
                                        <InvoiceLine>Order # 123789</InvoiceLine>
                                        <EmptyBox />
                                        <CustomerBox>
                                            Customer Info
                                            <CustomerAddress>
                                                xGUhoa kTNE<br />
                                                12st Main Road,<br />
                                                New Holland, TX - 17557<br />
                                                US
                                            </CustomerAddress>
                                        </CustomerBox>
                                    </SummaryColumn>
                                </SummaryPanel>
                            </GrayArea>
                            <BottomBar>
                                <ChargeButton>Charge <ChargeDollar>$</ChargeDollar> 5.00</ChargeButton>
                                <PaymentLink>Payment Link <ChevronUp size={18} strokeWidth={3} /></PaymentLink>
                                <OrderTab>Order Summary <ChevronDown size={18} strokeWidth={2.500} /></OrderTab>
                            </BottomBar>
                        </MainColumn>
                    </PageColumns>
                </PageBody>
                <Scrollbar>
                    <span>▲</span>
                    <ScrollThumb />
                    <span>▼</span>
                </Scrollbar>
            </PageArea>

            <Taskbar>
                <StartSlot>
                    <svg width="24" height="24" viewBox="0 0 24 24" fill="#4cc2ff">
                        <rect x="0" y="0" width="11.500" height="11.500" rx="1" />
                        <rect x="12.500" y="0" width="11.500" height="11.500" rx="1" />
                        <rect x="0" y="12.500" width="11.500" height="11.500" rx="1" />
                        <rect x="12.500" y="12.500" width="11.500" height="11.500" rx="1" />
                    </svg>
                </StartSlot>
                <SearchBox>
                    <Search size={17} color="#222" />
                    <SearchText>Search</SearchText>
                    <svg width="56" height="30" viewBox="0 0 56 30">
                        <circle cx="8" cy="15" r="9" fill="#4c8f7a" />
                        <path d="M3 11c3-2 6-2 7 1s-2 6-5 4z" fill="#7ab648" />
                        <path d="M20 8h6M20 15h6M20 22h6" stroke="#9fb4d0" strokeWidth="2" />
                        <ellipse cx="44" cy="15" rx="14" ry="17" fill="#f4c542" />
                    </svg>
                </SearchBox>
                {taskApps.map(app => (
                    <TaskSlot key={app.key} $running={app.running} $open={app.open}>{app.icon}</TaskSlot>
                ))}
                <Tray>
                    <TraySlot $width={32}><ChevronUp size={16} strokeWidth={2} /></TraySlot>
                    <TraySlot $width={32}>
                        <svg width="20" height="16" viewBox="0 0 20 16"><path d="M4 13a3.500 3.500 0 0 1 0-7 5 5 0 0 1 9.500-1A4 4 0 0 1 15 13z" fill="#c8ccd0" /><circle cx="14" cy="11" r="5" fill="#1c8be0" /><path d="M11.500 11h5" stroke="#fff" strokeWidth="1.500" /></svg>
                    </TraySlot>
                    <TraySlot $width={32}>
                        <svg width="20" height="14" viewBox="0 0 20 14" fill="#1e88e5"><path d="M4 13a3.500 3.500 0 0 1-.5-7A5.500 5.500 0 0 1 14 4.500 4.500 4.500 0 0 1 16 13z" /></svg>
                    </TraySlot>
                    <TraySlot $width={32}>
                        <svg width="20" height="20" viewBox="0 0 20 20" fill="none" stroke="#eee" strokeWidth="1.300"><path d="M2 9a7 7 0 0 1 12-4M14 1v4h-4M6 18l-2-2h4" /><circle cx="14" cy="14" r="4" fill="#f28c18" stroke="none" /></svg>
                    </TraySlot>
                    <MicSlot>
                        <svg width="14" height="20" viewBox="0 0 14 20" fill="none"><rect x="4" y="0" width="6" height="12" rx="3" fill="#0e2233" /><path d="M1 9c0 4 2.500 6 6 6s6-2 6-6M7 15v5" stroke="#0e2233" strokeWidth="1.300" /></svg>
                    </MicSlot>
                    <TraySlot $width={24} style={{ marginLeft: 4 }}><Wifi size={17} strokeWidth={1.600} /></TraySlot>
                    <TraySlot $width={24}><Volume1 size={17} strokeWidth={1.300} /></TraySlot>
                    <TraySlot $width={24}>
                        <svg width="18" height="14" viewBox="0 0 18 14" fill="none" stroke="#eee" strokeWidth="1.200"><rect x="1" y="3" width="14" height="9" rx="1.500" /><path d="M16 6v3" /><path d="M3 5h5v5H3z" fill="#eee" /></svg>
                    </TraySlot>
                    <TrayClock>12:24 PM<br />3/19/2024</TrayClock>
                    <TraySlot $width={24}><Bell size={16} strokeWidth={1.300} /></TraySlot>
                    <TraySlot $width={36} style={{ marginLeft: 6 }}>
                        <svg width="24" height="24" viewBox="0 0 24 24">
                            <path d="M2 12c0-6 3-9 7-9h6l-3 9c-1 4-2 6-6 6-3 0-4-3-4-6z" fill="#38a8e8" />
                            <path d="M15 3c4 0 7 3 7 8l-1 5h-9l2-7z" fill="#b060d8" />
                            <path d="M3 10c1-3 3-5 6-5l-2 8-3 3z" fill="#7ac74f" />
                            <rect x="6" y="15" width="18" height="9" rx="1" fill="#f4c21f" />
                            <text x="15" y="22" textAnchor="middle" fontSize="7" fontWeight="700" fill="#222" fontFamily="Liberation Sans">PRE</text>
                        </svg>
                    </TraySlot>
                </Tray>
            </Taskbar>

            <CallWindow>
                <CallTitleBar>
                    <CallTitle>Varadi Madhu</CallTitle>
                    <CaptionButton $hover>
                        <svg width="14" height="14" viewBox="0 0 14 14" stroke="#fff" fill="none"><path d="M1 7h12" /></svg>
                    </CaptionButton>
                    <CaptionButton>
                        <svg width="14" height="14" viewBox="0 0 14 14" stroke="#fff" strokeWidth="1.200" fill="none"><rect x="2" y="1.500" width="11" height="11" /></svg>
                    </CaptionButton>
                    <CaptionButton>
                        <svg width="14" height="14" viewBox="0 0 14 14" stroke="#fff" fill="none"><path d="M1 1l12 12M13 1 1 13" /></svg>
                    </CaptionButton>
                </CallTitleBar>
                <CallToolbar>
                    <svg width="14" height="16" viewBox="0 0 14 16" fill="none" stroke="#e6e6e6" strokeWidth="1.200">
                        <path d="M7 1c1.500 1.200 3.500 1.800 6 1.800v5C13 11.500 10.500 14 7 15 3.500 14 1 11.500 1 7.800v-5C3.500 2.800 5.500 2.200 7 1z" />
                    </svg>
                    <Timer>00:06</Timer>
                    <CallActions>
                        {callActions.map(action => (
                            <CallAction key={action.label}>
                                <ActionIcon>{action.icon}</ActionIcon>
                                {action.label}
                            </CallAction>
                        ))}
                        <ActionDivider />
                        <CallAction><ActionIcon><ChatIcon /></ActionIcon>Chat</CallAction>
                        <CallAction><ActionIcon><PersonIcon /><PeopleCount>2</PeopleCount></ActionIcon>People</CallAction>
                        <CallAction><ActionIcon><GridIcon /></ActionIcon>View</CallAction>
                        <CallAction><ActionIcon><AppsIcon /></ActionIcon>Apps</CallAction>
                        <CallAction><ActionIcon><MoreIcon /></ActionIcon>More</CallAction>
                        <ActionDivider />
                        <CallAction $bright><ActionIcon><CameraOffIcon /></ActionIcon>Camera</CallAction>
                        <CallAction $bright><ActionIcon><MicIcon /></ActionIcon>Mic</CallAction>
                        <CallAction $bright><ActionIcon><ShareIcon /></ActionIcon>Share</CallAction>
                        <LeaveButton><HangUpIcon /> Leave</LeaveButton>
                    </CallActions>
                </CallToolbar>
                <CallStage>
                    <MainAvatar>VM</MainAvatar>
                    <ParticipantName>Varadi Madhu</ParticipantName>
                    <SelfTile><SelfAvatar>MS</SelfAvatar></SelfTile>
                </CallStage>
            </CallWindow>
        </Desktop>
    );
};

export default App;
